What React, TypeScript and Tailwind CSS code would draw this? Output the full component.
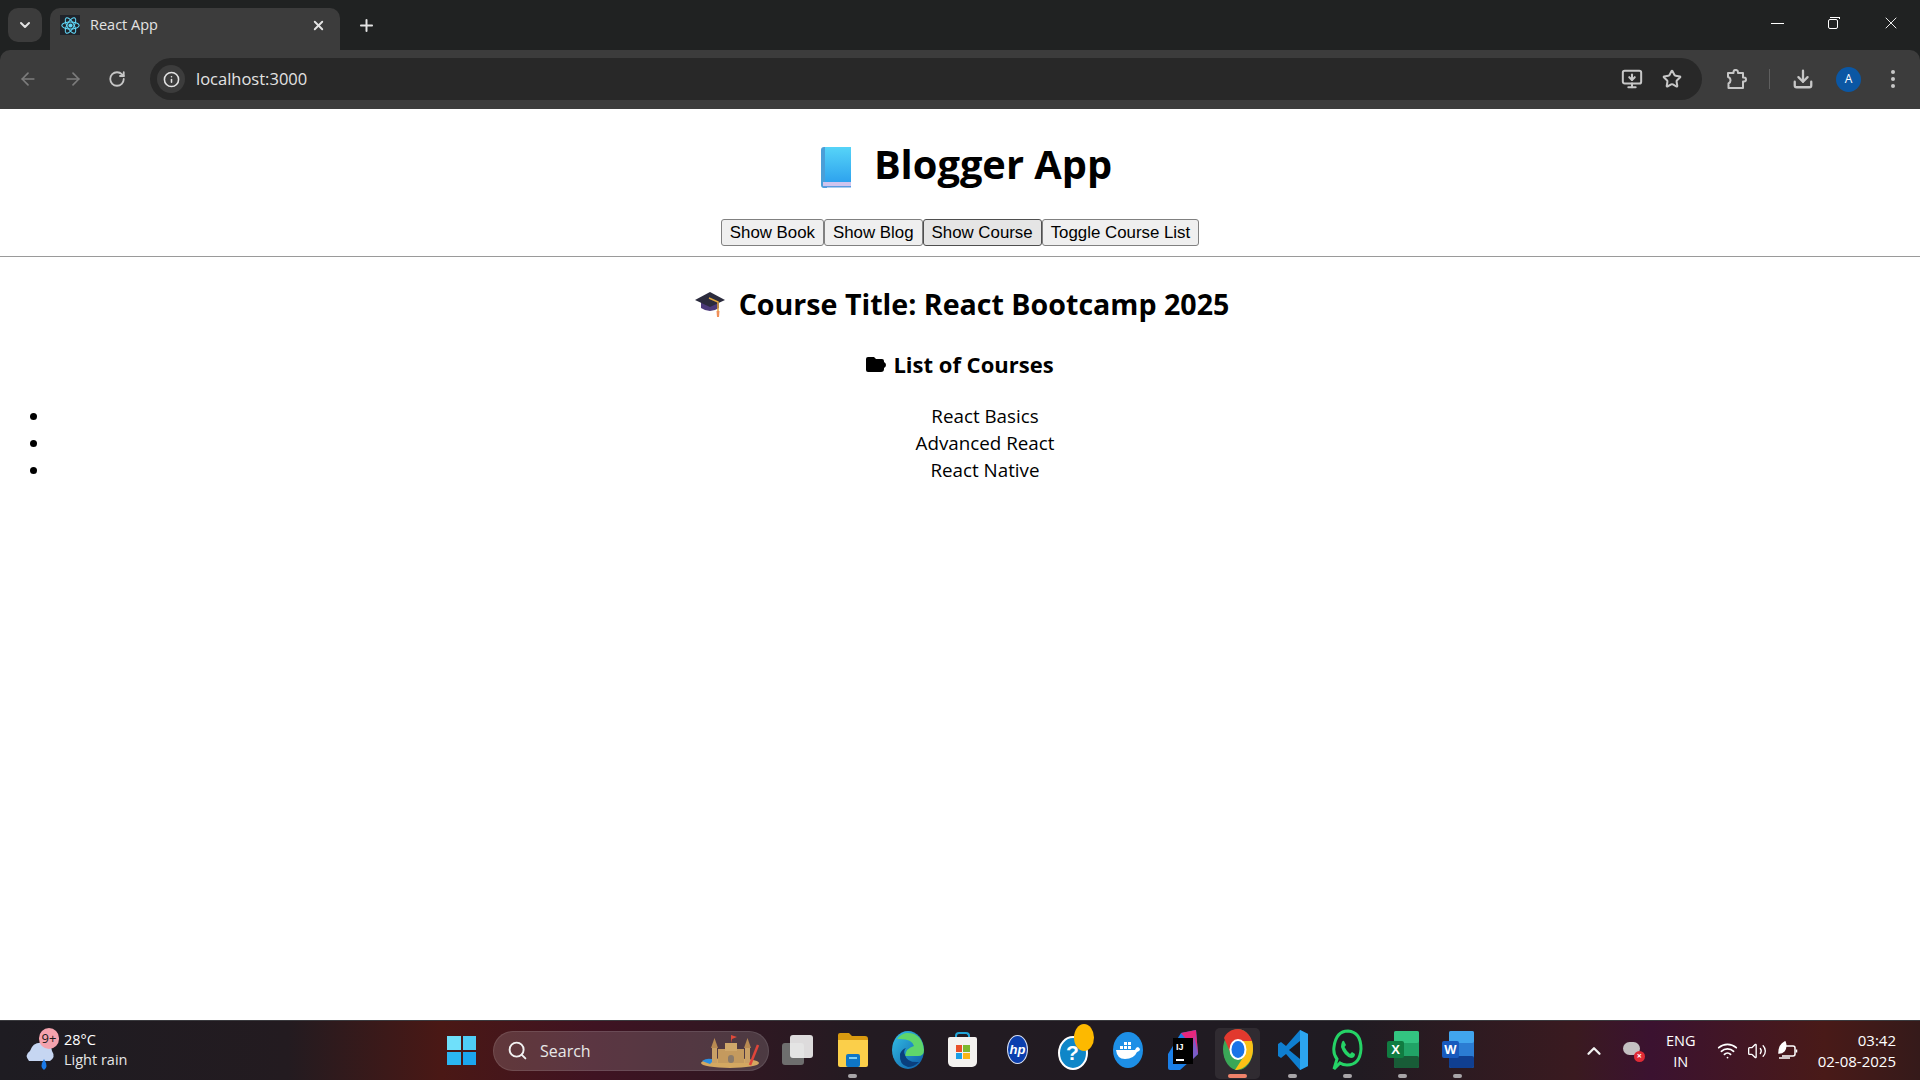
import React from "react";
import {
  ArrowLeft,
  ArrowRight,
  ChevronDown,
  ChevronUp,
  Download,
  Info,
  MonitorDown,
  Plus,
  RotateCw,
  Search,
  Star,
  Volume2,
  Wifi,
  X,
} from "lucide-react";

const ReactLogo = () => (
  <div className="w-5 h-5 bg-[#20232a] flex items-center justify-center">
    <svg width="19" height="19" viewBox="0 0 24 24" fill="none" stroke="#61dafb" strokeWidth="1.3">
      <circle cx="12" cy="12" r="2" fill="#61dafb" />
      <ellipse cx="12" cy="12" rx="11" ry="4.3" />
      <ellipse cx="12" cy="12" rx="11" ry="4.3" transform="rotate(60 12 12)" />
      <ellipse cx="12" cy="12" rx="11" ry="4.3" transform="rotate(120 12 12)" />
    </svg>
  </div>
);

const PuzzleIcon = () => (
  <svg width="21" height="21" viewBox="0 0 21 21" fill="none" stroke="#c7c7c7" strokeWidth="2" strokeLinejoin="round">
    <path d="M2 4H7.5V3.2A2.2 2.2 0 0 1 12 3.2V4H17V8.5H18A2 2 0 0 1 18 12.5H17V19H2.5V14.5A3.5 3.5 0 0 0 4.5 11.2A3.5 3.5 0 0 0 2 8Z" />
  </svg>
);

const BookEmoji = () => (
  <svg width="36" height="42" viewBox="0 0 36 42">
    <defs>
      <linearGradient id="bookFill" x1="0" y1="0" x2="0" y2="1">
        <stop offset="0" stopColor="#56d4f8" />
        <stop offset="1" stopColor="#2ea3ee" />
      </linearGradient>
    </defs>
    <path d="M3 0H30V35H6V41H3Q0 41 0 38V3Q0 0 3 0Z" fill="#4a9fd8" />
    <rect x="4" y="0" width="26" height="35" fill="url(#bookFill)" />
    <rect x="2" y="35" width="28" height="4" fill="#cfc4ee" />
    <rect x="2" y="39" width="28" height="1.5" fill="#5b9be0" />
  </svg>
);

const CapEmoji = () => (
  <svg width="30" height="28" viewBox="0 0 30 28">
    <path d="M6 11V18Q15 24 24 18V11Z" fill="#4b3a7a" />
    <path d="M0 10L15 2L30 10L15 17Z" fill="#2b2b3d" />
    <path d="M14 8L23 12V21" fill="none" stroke="#e2a63c" strokeWidth="1.5" />
    <path d="M21.5 21H24.5L24 27H22Z" fill="#f0905a" />
  </svg>
);

const FolderGlyph = () => (
  <svg width="20" height="15" viewBox="0 0 20 15">
    <path d="M2 0H8L10 2H16Q18 2 18 4V5Q20 6 20 8Q20 10 18 11V12Q18 15 15 15H2Q0 15 0 13V2Q0 0 2 0Z" fill="#000" />
  </svg>
);

const WindowsLogo = () => (
  <div className="grid grid-cols-2 gap-[2px] w-[29px] h-[29px]">
    <div className="bg-[#6fe0fa]" />
    <div className="bg-[#4fcdf6]" />
    <div className="bg-[#2bb6f2]" />
    <div className="bg-[#1ba6ee]" />
  </div>
);

const Sandcastle = () => (
  <svg width="60" height="36" viewBox="0 0 60 36">
    <ellipse cx="30" cy="30" rx="29" ry="5" fill="#d4a861" />
    <path d="M2 28Q8 24 14 27L10 31Z" fill="#2b8ee0" />
    <rect x="12" y="14" width="5" height="16" fill="#c9a066" />
    <path d="M14.5 5L18 15H11Z" fill="#b88a52" />
    <rect x="18" y="16" width="26" height="14" fill="#c49a5e" />
    <rect x="25" y="10" width="12" height="8" fill="#cfa76a" />
    <rect x="45" y="14" width="5" height="16" fill="#c9a066" />
    <path d="M47.5 5L51 15H44Z" fill="#b88a52" />
    <path d="M31 10V2L37 4L32 6" fill="#e04a3a" />
    <rect x="28" y="22" width="6" height="8" rx="3" fill="#8a7a6a" />
    <path d="M58 12L50 32" stroke="#e0453a" strokeWidth="2.5" />
  </svg>
);

const TaskView = () => (
  <div className="relative w-[31px] h-[30px]">
    <div className="absolute left-0 bottom-0 w-[22px] h-[22px] rounded-[3px] bg-[#6e6e6e]" />
    <div className="absolute right-0 top-0 w-[23px] h-[23px] rounded-[3px] bg-[#f1f1f1]/90" />
  </div>
);

const Files = () => (
  <svg width="32" height="36" viewBox="0 0 32 36">
    <path d="M1 3Q1 1 3 1H12L15 4H28Q31 4 31 7V12H1Z" fill="#d99a10" />
    <path d="M1 8H31V33Q31 35 29 35H3Q1 35 1 33Z" fill="#fbcf4a" />
    <rect x="9" y="22" width="14" height="13" rx="2" fill="#0e76c6" />
    <rect x="12" y="25" width="8" height="2" fill="#7fd0f5" />
  </svg>
);

const Edge = () => (
  <svg width="32" height="38" viewBox="0 0 32 38">
    <defs>
      <linearGradient id="edgeFill" x1="0" y1="0" x2="1" y2="1">
        <stop offset="0" stopColor="#34c1e8" />
        <stop offset="1" stopColor="#0c59a4" />
      </linearGradient>
    </defs>
    <ellipse cx="16" cy="19" rx="16" ry="19" fill="url(#edgeFill)" />
    <path d="M14 2Q30 1 32 19Q32 25 26 25H13Q14 17 22 15Q20 7 5 8Q9 3 14 2Z" fill="#5fd66b" />
    <path d="M13 24Q15 32 27 31Q22 36 16 36Q7 34 8 23Q10 18 14 17Q11 20 13 24Z" fill="#0a3f7d" />
  </svg>
);

const Store = () => (
  <div className="relative w-[29px] h-[35px]">
    <div className="absolute left-[7px] top-0 w-[15px] h-[10px] rounded-t-[4px] border-2 border-b-0 border-[#22a5d8]" />
    <div className="absolute left-0 bottom-0 w-[29px] h-[30px] rounded-b-[5px] rounded-t-[2px] bg-[#f4f2f0] flex items-center justify-center">
      <div className="grid grid-cols-2 gap-[1px] w-[14px] h-[14px]">
        <div className="bg-[#e8502a]" />
        <div className="bg-[#7cb82f]" />
        <div className="bg-[#1b9fe6]" />
        <div className="bg-[#fbb516]" />
      </div>
    </div>
  </div>
);

const HpLogo = () => (
  <div className="w-[21px] h-[29px] rounded-[50%] bg-[#0b3fae] border border-[#d8dff0] flex items-center justify-center">
    <span className="text-white text-[13px] italic font-bold font-['Liberation_Sans',sans-serif]">hp</span>
  </div>
);

const HelpIcon = () => (
  <div className="relative w-[30px] h-[36px] mt-1">
    <div className="absolute left-0 bottom-0 w-[30px] h-[34px] rounded-[50%] bg-[#0f86c8] border-2 border-white flex items-center justify-center">
      <span className="text-white text-[21px] font-bold font-['Liberation_Sans',sans-serif]">?</span>
    </div>
    <div className="absolute left-[16px] top-[-10px] w-[20px] h-[27px] rounded-[50%] bg-[#fdb900]" />
  </div>
);

const DockerIcon = () => (
  <svg width="30" height="36" viewBox="0 0 30 36">
    <ellipse cx="15" cy="18" rx="15" ry="18" fill="#1d8fe6" />
    <path d="M3 18H22Q23 15 25 15Q27 16 27 18Q25 20 24 20Q21 27 12 27Q4 27 3 18Z" fill="#fff" />
    <rect x="7" y="14" width="3" height="3" fill="#fff" />
    <rect x="11" y="14" width="3" height="3" fill="#fff" />
    <rect x="15" y="14" width="3" height="3" fill="#fff" />
    <rect x="11" y="10" width="3" height="3" fill="#fff" />
    <rect x="15" y="10" width="3" height="3" fill="#fff" />
  </svg>
);

const JetBrains = () => (
  <svg width="30" height="40" viewBox="0 0 30 40">
    <path d="M0 24L13 3L28 0L30 24L12 40H2Q0 40 0 38Z" fill="#1a7fe8" />
    <path d="M13 3L28 0L30 24Z" fill="#e6277d" />
    <path d="M26 5L30 24L24 30Z" fill="#7a5cc7" />
    <rect x="5" y="8" width="20" height="26" fill="#000" />
    <rect x="8" y="29" width="8" height="2" fill="#fff" />
    <text x="8" y="20" fill="#fff" fontSize="9" fontWeight="700" fontFamily="Liberation Sans, sans-serif">IJ</text>
  </svg>
);

const ChromeLogo = () => (
  <svg width="30" height="41" viewBox="0 0 30 41">
    <ellipse cx="15" cy="20.5" rx="15" ry="20.5" fill="#3aa757" />
    <path d="M15 0C8 0 3 4 1 9L8 25Q7 13 15 12H29C27 5 21 0 15 0Z" fill="#e2392e" />
    <path d="M29 12H15Q24 13 21 27L12 41C22 41 30 32 30 20Q30 15 29 12Z" fill="#fbc116" />
    <ellipse cx="15" cy="20.5" rx="8.5" ry="10.5" fill="#fff" />
    <ellipse cx="15" cy="20.5" rx="6.5" ry="8.5" fill="#1a73e8" />
  </svg>
);

const VsCode = () => (
  <svg width="30" height="40" viewBox="0 0 30 40">
    <path d="M22 0L30 4V36L22 40L8 24L3 28L0 26V14L3 12L8 16Z" fill="#0f7fd0" />
    <path d="M22 0L30 4V36L22 40Z" fill="#2ca5ef" />
    <path d="M22 11L11 20L22 29Z" fill="#1a1820" />
  </svg>
);

const WhatsApp = () => (
  <svg width="31" height="42" viewBox="0 0 31 42" fill="none">
    <path d="M2 40L5 30Q1 25 2 18Q4 2 16 2Q29 3 29 20Q28 36 15 36Q11 36 8 34Z" stroke="#25d366" strokeWidth="3" />
    <path d="M10 13Q11 11 12 12L14 16L12.5 18Q15 23 18 25L20 23L23 25Q23 29 19 29Q12 27 9 18Q9 15 10 13Z" fill="#25d366" />
  </svg>
);

const OfficeIcon = ({
  letter,
  tint,
  tile,
  light,
  dark,
}: {
  letter: string;
  tint: string;
  tile: string;
  light: string;
  dark: string;
}) => (
  <svg width="32" height="37" viewBox="0 0 32 37">
    <rect x="7" y="0" width="25" height="37" rx="2" fill={tint} />
    <rect x="7" y="0" width="25" height="12" rx="2" fill={light} />
    <rect x="7" y="25" width="25" height="12" rx="2" fill={dark} />
    <rect x="0" y="10" width="17" height="17" rx="2" fill={tile} />
    <text x="8.5" y="23" textAnchor="middle" fill="#fff" fontSize="13" fontWeight="700" fontFamily="Liberation Sans, sans-serif">
      {letter}
    </text>
  </svg>
);

const taskbarApps: { key: string; icon: React.ReactNode; dot?: boolean; active?: boolean }[] = [
  { key: "taskview", icon: <TaskView /> },
  { key: "files", icon: <Files />, dot: true },
  { key: "edge", icon: <Edge /> },
  { key: "store", icon: <Store /> },
  { key: "hp", icon: <HpLogo /> },
  { key: "help", icon: <HelpIcon /> },
  { key: "docker", icon: <DockerIcon /> },
  { key: "jetbrains", icon: <JetBrains /> },
  { key: "chrome", icon: <ChromeLogo />, active: true },
  { key: "vscode", icon: <VsCode />, dot: true },
  { key: "whatsapp", icon: <WhatsApp />, dot: true },
  {
    key: "excel",
    icon: <OfficeIcon letter="X" tint="#21a366" tile="#107c41" light="#33c481" dark="#185c37" />,
    dot: true,
  },
  {
    key: "word",
    icon: <OfficeIcon letter="W" tint="#2b7cd3" tile="#185abd" light="#41a5ee" dark="#103f91" />,
    dot: true,
  },
];

const BrowserChrome = () => (
  <div className="bg-[#202222] font-['Open_Sans',sans-serif]">
    <div className="h-[50px] flex">
      <div className="w-[50px] pl-2 pt-2">
        <div className="w-[34px] h-[34px] rounded-[10px] bg-[#3c3c3c] flex items-center justify-center">
          <ChevronDown size={16} color="#e3e3e3" strokeWidth={3} />
        </div>
      </div>
      <div className="mt-2 w-[290px] h-[42px] rounded-t-[10px] bg-[#3c3c3c] flex items-center pl-[10px] pr-[14px] pb-[8px]">
        <ReactLogo />
        <span className="ml-[10px] text-[14.5px] text-[#e3e3e3] flex-1">React App</span>
        <X size={15} color="#e3e3e3" strokeWidth={3} />
      </div>
      <div className="ml-[17px] flex items-start pt-[16px]">
        <Plus size={19} color="#e3e3e3" strokeWidth={2.5} />
      </div>
      <div className="ml-auto flex items-center text-white pb-1">
        <div className="w-[55px] flex justify-center">
          <div className="w-[13px] h-px bg-white" />
        </div>
        <div className="w-[57px] flex justify-center">
          <div className="relative w-3 h-3">
            <div className="absolute left-0 bottom-0 w-[10px] h-[10px] rounded-[2px] border border-white" />
            <div className="absolute right-0 top-0 w-[10px] h-[2px] border-t border-r border-white" />
          </div>
        </div>
        <div className="w-[58px] flex justify-center">
          <X size={20} color="#fff" strokeWidth={1.1} />
        </div>
      </div>
    </div>
    <div className="h-[59px] rounded-t-[10px] bg-[#3c3c3c] flex items-center pb-px">
      <div className="w-[150px] flex items-center pl-[18px] gap-[25px]">
        <ArrowLeft size={20} color="#7c7c7c" />
        <ArrowRight size={20} color="#7c7c7c" />
        <RotateCw size={18} color="#c7c7c7" strokeWidth={2.4} />
      </div>
      <div className="w-[1552px] h-[42px] rounded-full bg-[#282828] flex items-center pl-[7px] pr-[20px]">
        <div className="w-[28px] h-[28px] rounded-full bg-[#3c3c3c] flex items-center justify-center">
          <Info size={17} color="#e3e3e3" strokeWidth={2.2} />
        </div>
        <span className="ml-[11px] text-[16.5px] text-[#e3e3e3] flex-1">localhost:3000</span>
        <MonitorDown size={22} color="#c7c7c7" strokeWidth={2.2} />
        <Star size={20} color="#c7c7c7" strokeWidth={2.4} className="ml-[19px]" />
      </div>
      <div className="flex-1 flex items-center pl-[24px]">
        <PuzzleIcon />
        <div className="ml-[22px] w-px h-[20px] bg-[#5f5f5f]" />
        <Download size={22} color="#c7c7c7" strokeWidth={2.5} className="ml-[22px]" />
        <div className="ml-[22px] w-[25px] h-[25px] rounded-full bg-[#0b57a4] flex items-center justify-center text-white text-[12px]">
          A
        </div>
        <div className="ml-[30px] flex flex-col gap-[3px]">
          <div className="w-[4px] h-[4px] rounded-full bg-[#c7c7c7]" />
          <div className="w-[4px] h-[4px] rounded-full bg-[#c7c7c7]" />
          <div className="w-[4px] h-[4px] rounded-full bg-[#c7c7c7]" />
        </div>
      </div>
    </div>
  </div>
);

const Page = () => (
  <main className="h-[911px] bg-white text-black font-['Open_Sans',sans-serif] overflow-hidden">
    <h1 className="pt-[28px] h-[110px] flex justify-center items-start gap-[17px] ml-[13px] text-[39.8px] leading-[54px] font-bold">
      <span className="mt-[10px]">
        <BookEmoji />
      </span>
      Blogger App
    </h1>
    <div className="flex justify-center font-['Liberation_Sans',sans-serif] text-[16.85px] leading-[19px]">
      <button className="h-[27px] px-2 bg-[#efefef] border border-[#808080] rounded-[3px]">Show Book</button>
      <button className="h-[27px] px-2 bg-[#efefef] border border-[#808080] rounded-[3px]">Show Blog</button>
      <button className="h-[27px] px-2 bg-[#e5e5e5] border border-[#4f4f4f] rounded-[3px]">Show Course</button>
      <button className="h-[27px] px-2 bg-[#efefef] border border-[#808080] rounded-[3px]">Toggle Course List</button>
    </div>
    <hr className="mt-[10px] border-t border-[#9a9a9a]" />
    <h2 className="mt-[27px] ml-[4px] flex justify-center items-center gap-[14px] text-[28.6px] leading-[40px] font-bold">
      <CapEmoji />
      Course Title: React Bootcamp 2025
    </h2>
    <h3 className="mt-[24px] flex justify-center items-center gap-[7px] text-[22px] leading-[32px] font-bold">
      <FolderGlyph />
      List of Courses
    </h3>
    <ul className="mt-[23px] pl-[50px] list-disc text-[18.8px] leading-[27px] text-center">
      <li>React Basics</li>
      <li>Advanced React</li>
      <li>React Native</li>
    </ul>
  </main>
);

const Taskbar = () => (
  <footer className="h-[60px] flex items-center border-t border-[#3a3a3e] text-white font-['Open_Sans',sans-serif] bg-[linear-gradient(90deg,#1e1c22_0%,#231b20_15%,#4a1815_23%,#3f1322_31%,#231b22_45%,#1f1b22_70%,#3a1a20_82%,#3b1230_86%,#491a18_95%,#351a1a_100%)]">
    <div className="w-[440px] flex items-center pl-[24px]">
      <div className="relative w-[36px] h-[40px]">
        <svg width="32" height="36" viewBox="0 0 32 36" className="absolute left-0 top-[6px]">
          <path d="M5 24Q0 18 6 14Q9 4 20 6Q28 8 28 14Q32 20 26 24Z" fill="#c6d6f2" />
          <path d="M20 22Q25 30 20 33Q15 30 20 22Z" fill="#1a7ae8" />
        </svg>
        <div className="absolute left-[15px] top-[-3px] w-[20px] h-[21px] rounded-full bg-[#f4a3ae] text-[#1a1a1a] text-[13px] leading-[21px] text-center">
          9+
        </div>
      </div>
      <div className="ml-[4px] text-[14.5px] leading-[20px] pb-[2px]">
        <div>28°C</div>
        <div className="text-[#e6e6e6]">Light rain</div>
      </div>
    </div>
    <div className="w-[53px] flex justify-start pl-[7px]">
      <WindowsLogo />
    </div>
    <div className="w-[276px] h-[40px] rounded-full bg-white/15 border border-white/10 flex items-center pl-[13px] pr-[3px] relative">
      <Search size={21} color="#f2f2f2" strokeWidth={2.2} />
      <span className="ml-[12px] text-[16px] text-[#e8e8e8]">Search</span>
      <div className="absolute right-[8px] bottom-[1px]">
        <Sandcastle />
      </div>
    </div>
    <div className="ml-[1px] flex h-full">
      {taskbarApps.map((app) => (
        <div key={app.key} className="relative w-[55px] h-full flex items-center justify-center">
          {app.active && (
            <div className="absolute left-[5px] right-[5px] top-[7px] bottom-[1px] rounded-[5px] bg-white/[.07]" />
          )}
          <div className="relative flex items-center justify-center pb-[2px]">{app.icon}</div>
          {app.dot && (
            <div className="absolute left-[23px] bottom-[2px] w-[9px] h-[4px] rounded-full bg-[#a8a5a8]" />
          )}
          {app.active && (
            <div className="absolute left-[18px] bottom-[2px] w-[19px] h-[4px] rounded-full bg-[#f0826a]" />
          )}
        </div>
      ))}
    </div>
    <div className="ml-auto pr-[24px] flex items-center">
      <ChevronUp size={22} color="#f2f2f2" strokeWidth={2.5} />
      <div className="ml-[18px] relative w-[22px] h-[22px]">
        <div className="absolute left-0 top-[2px] w-[17px] h-[13px] rounded-full bg-[#c4c0c2]" />
        <div className="absolute right-0 bottom-0 w-[11px] h-[11px] rounded-full bg-[#e02b36] text-white text-[9px] leading-[10px] text-center font-bold">
          ×
        </div>
      </div>
      <div className="ml-[17px] w-[38px] text-center text-[14.5px] leading-[21px]">
        <div>ENG</div>
        <div>IN</div>
      </div>
      <Wifi size={21} color="#fff" strokeWidth={2} className="ml-[17px]" />
      <Volume2 size={20} color="#fff" strokeWidth={1.6} className="ml-[9px]" />
      <svg width="20" height="20" viewBox="0 0 20 20" fill="none" stroke="#fff" strokeWidth="1.5" className="ml-[11px]">
        <path d="M6 5H15Q17 5 17 7V13Q17 15 15 15H4" />
        <path d="M18.5 8.5V11.5" />
        <path d="M1 12Q1 4 7 1Q9 6 6 10Q4 12 1 12Z" fill="#fff" />
        <path d="M1 17H12" />
      </svg>
      <div className="ml-[20px] text-right text-[15px] leading-[21px]">
        <div>03:42</div>
        <div>02-08-2025</div>
      </div>
    </div>
  </footer>
);

export default function App() {
  return (
    <div className="w-[1920px] h-[1080px] overflow-hidden flex flex-col">
      <BrowserChrome />
      <Page />
      <Taskbar />
    </div>
  );
}
